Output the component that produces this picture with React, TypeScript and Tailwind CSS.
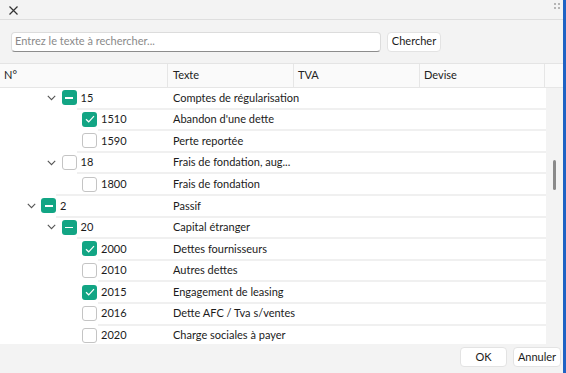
import React from "react";

type Check = "on" | "off" | "mixed";

type Row = {
  level: number;
  num: string;
  text: string;
  check: Check;
  expandable?: boolean;
};

const ROWS: Row[] = [
  { level: 2, num: "15", text: "Comptes de régularisation", check: "mixed", expandable: true },
  { level: 3, num: "1510", text: "Abandon d'une dette", check: "on" },
  { level: 3, num: "1590", text: "Perte reportée", check: "off" },
  { level: 2, num: "18", text: "Frais de fondation, aug...", check: "off", expandable: true },
  { level: 3, num: "1800", text: "Frais de fondation", check: "off" },
  { level: 1, num: "2", text: "Passif", check: "mixed", expandable: true },
  { level: 2, num: "20", text: "Capital étranger", check: "mixed", expandable: true },
  { level: 3, num: "2000", text: "Dettes fournisseurs", check: "on" },
  { level: 3, num: "2010", text: "Autres dettes", check: "off" },
  { level: 3, num: "2015", text: "Engagement de leasing", check: "on" },
  { level: 3, num: "2016", text: "Dette AFC / Tva s/ventes", check: "off" },
  { level: 3, num: "2020", text: "Charge sociales à payer", check: "off" },
];

// left padding before the chevron slot, per tree level
const INDENT: Record<number, string> = {
  1: "pl-[21px]",
  2: "pl-[41.5px]",
  3: "pl-[62px]",
};

// where the separator under a row starts
const LINE: Record<number, string> = {
  1: "ml-[56px]",
  2: "ml-[77px]",
  3: "ml-[98px]",
};

function Chevron() {
  return (
    <svg width="9" height="6" viewBox="0 0 9 6" fill="none">
      <path d="M0.8 0.8 L4.5 4.6 L8.2 0.8" stroke="#555" strokeWidth="1.1" />
    </svg>
  );
}

function CheckBox({ state }: { state: Check }) {
  if (state === "off") {
    return <div className="w-[15px] h-[15px] rounded-[3px] border border-[#c4c4c4] bg-white shrink-0" />;
  }
  return (
    <div className="w-[15px] h-[15px] rounded-[3px] bg-[#12a584] flex items-center justify-center shrink-0">
      {state === "on" ? (
        <svg width="10" height="8" viewBox="0 0 10 8" fill="none">
          <path d="M1 4.2 L3.7 6.8 L9 1.2" stroke="white" strokeWidth="1.2" />
        </svg>
      ) : (
        <div className="w-[8px] h-[1.5px] bg-white" />
      )}
    </div>
  );
}

function Button({ label, w }: { label: string; w: string }) {
  return (
    <div
      className={`${w} h-[20px] bg-white border border-[#e3e3e3] rounded-[4px] flex items-center justify-center text-[11px] text-[#1b1b1b]`}
    >
      {label}
    </div>
  );
}

export default function App() {
  return (
    <div
      className="w-[566px] h-[373px] bg-[#f3f3f3] flex overflow-hidden text-[#1b1b1b]"
      style={{ fontFamily: 'Lato, "Noto Sans", sans-serif' }}
    >
      <div className="flex-1 flex flex-col">
        {/* title bar */}
        <div className="h-[20px] border-b border-[#dedede] flex items-start justify-between">
          <svg className="ml-[9px] mt-[6px]" width="9" height="9" viewBox="0 0 9 9">
            <path d="M0.5 0.5 L8.5 8.5 M8.5 0.5 L0.5 8.5" stroke="#333" strokeWidth="1.2" />
          </svg>
          <svg className="mr-[3px] mt-[3px]" width="6" height="6" viewBox="0 0 6 6">
            <rect x="0" y="0" width="2" height="2" fill="#b5b5b5" />
            <rect x="4" y="0" width="2" height="2" fill="#b5b5b5" />
            <rect x="0" y="4" width="2" height="2" fill="#b5b5b5" />
            <rect x="4" y="4" width="2" height="2" fill="#b5b5b5" />
          </svg>
        </div>

        {/* search */}
        <div className="h-[43px] flex items-center pl-[11px] gap-[6px]">
          <div className="w-[370px] h-[20px] bg-white rounded-[4px] border border-[#dcdcdc] border-b-[#8c8c8c] flex items-center pl-[3px] text-[11px] text-[#8a8a8a]">
            Entrez le texte à rechercher...
          </div>
          <Button label="Chercher" w="w-[54px]" />
        </div>

        {/* tree */}
        <div className="flex-1 flex flex-col min-h-0 bg-white border-t border-[#e4e4e4]">
          <div className="h-[24px] flex bg-[#fafafa] border-b border-[#e6e6e6] text-[11px] text-[#222]">
            <div className="w-[168px] border-r border-[#e6e6e6] flex items-center pl-[4px]">N°</div>
            <div className="w-[126px] border-r border-[#e6e6e6] flex items-center pl-[5px]">Texte</div>
            <div className="w-[126px] border-r border-[#e6e6e6] flex items-center pl-[4px]">TVA</div>
            <div className="w-[125px] border-r border-[#e6e6e6] flex items-center pl-[4px]">Devise</div>
            <div className="flex-1" />
          </div>
          <div className="flex-1 flex min-h-0">
            <div className="w-[546px] overflow-hidden">
              {ROWS.map((r, i) => {
                const next = ROWS[i + 1];
                const lineLevel = next ? Math.min(r.level, next.level) : r.level;
                return (
                  <div key={r.num} className="flex flex-col">
                    <div className="h-[19.6px] flex items-center text-[11px]">
                      <div className={`w-[168px] flex items-center ${INDENT[r.level]}`}>
                        <div className="w-[20px] flex justify-center">{r.expandable && <Chevron />}</div>
                        <CheckBox state={r.check} />
                        <span className="ml-[4px]">{r.num}</span>
                      </div>
                      <div className="pl-[5px] whitespace-nowrap">{r.text}</div>
                    </div>
                    <div className={`h-[2px] bg-[#f0f0f0] ${LINE[lineLevel]}`} />
                  </div>
                );
              })}
            </div>
            <div className="flex-1 bg-[#f3f3f3] pl-[7px] pt-[72px]">
              <div className="w-[3px] h-[30px] rounded-full bg-[#8a8a8a]" />
            </div>
          </div>
        </div>

        {/* footer */}
        <div className="h-[29px] flex justify-end items-start pt-[3px] pr-[2px] gap-[6px]">
          <Button label="OK" w="w-[47px]" />
          <Button label="Annuler" w="w-[48px]" />
        </div>
      </div>
      <div className="w-[3px] bg-[#1f62c4]" />
    </div>
  );
}
